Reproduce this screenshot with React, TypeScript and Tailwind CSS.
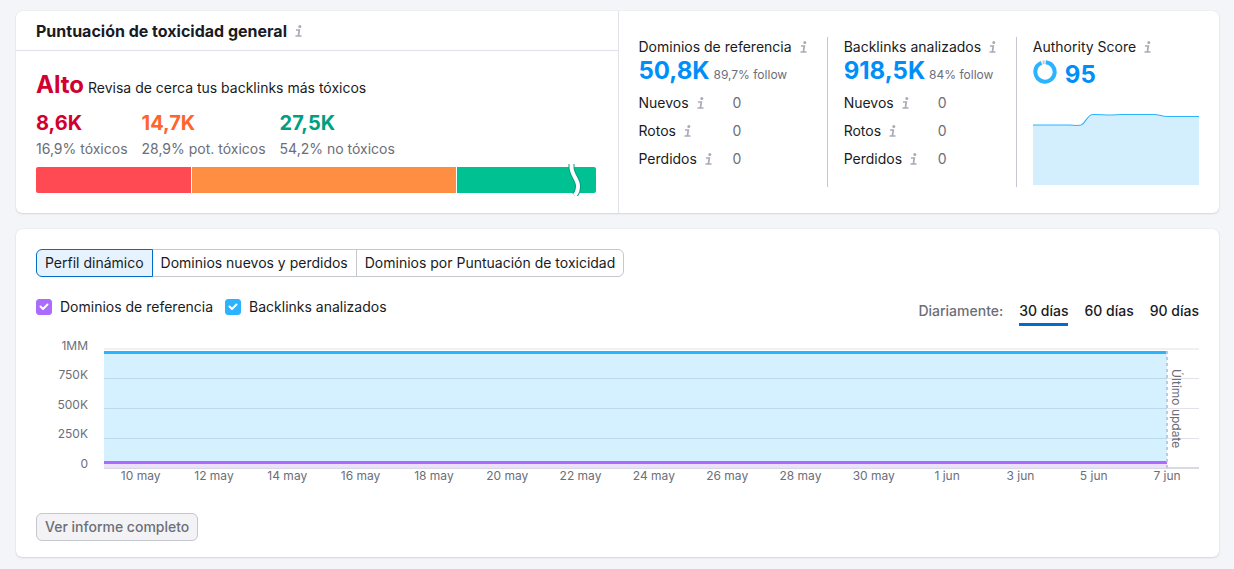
import { useState } from 'react';

const METRICS = [
  { id: 'domains', title: 'Dominios de referencia', value: '50,8K', follow: '89,7% follow' },
  { id: 'backlinks', title: 'Backlinks analizados', value: '918,5K', follow: '84% follow' },
];

const CHANGES = ['Nuevos', 'Rotos', 'Perdidos'];

const TOXICITY = [
  { value: '8,6K', label: '16,9% tóxicos', color: 'text-[#d1002f]' },
  { value: '14,7K', label: '28,9% pot. tóxicos', color: 'text-[#ff642d]' },
  { value: '27,5K', label: '54,2% no tóxicos', color: 'text-[#009f81]' },
];

const TABS = ['Perfil dinámico', 'Dominios nuevos y perdidos', 'Dominios por Puntuación de toxicidad'];

const PERIODS = ['30 días', '60 días', '90 días'];

const Y_TICKS = [
  { label: '1MM', y: 13 },
  { label: '750K', y: 42 },
  { label: '500K', y: 72 },
  { label: '250K', y: 101 },
  { label: '0', y: 131 },
];

const X_TICKS = [
  '10 may', '12 may', '14 may', '16 may', '18 may', '20 may', '22 may', '24 may',
  '26 may', '28 may', '30 may', '1 jun', '3 jun', '5 jun', '7 jun',
];

// the series ends before the right edge, at the last update
const SERIES_END = 97.08;
const TICK_STEP = SERIES_END / 14.5;

function InfoIcon() {
  return (
    <svg width="16" height="16" viewBox="0 0 16 16" className="shrink-0 text-[#a9abb6]" fill="none" aria-hidden="true">
      <circle cx="8.8" cy="3.5" r="1.5" fill="currentColor" />
      <path d="M5 7H8.3L7.4 13M4.5 13H10.5" stroke="currentColor" strokeWidth="1.7" />
    </svg>
  );
}

function ToxicityPanel() {
  return (
    <section>
      <div className="flex h-10 items-center gap-1 border-b border-[#e0e1e9] px-5">
        <h2 className="text-base font-bold">Puntuación de toxicidad general</h2>
        <InfoIcon />
      </div>
      <div className="py-5 pr-[22px] pl-5">
        <p className="leading-7">
          <span className="text-2xl leading-7 font-bold text-[#d1002f]">Alto</span>{' '}
          Revisa de cerca tus backlinks más tóxicos
        </p>
        <div className="mt-[9px] flex gap-[14px]">
          {TOXICITY.map((item) => (
            <div key={item.label}>
              <div className={`text-xl leading-6 font-bold ${item.color}`}>{item.value}</div>
              <div className="mt-1 text-[#6c6e79]">{item.label}</div>
            </div>
          ))}
        </div>
        <div className="relative mt-2 flex h-[26px] gap-px">
          <div className="flex-[155] rounded-l-xs bg-[#ff4953]" />
          <div className="flex-[264] bg-[#ff8e43]" />
          <div className="flex-[139] rounded-r-xs bg-[#00c192]" />
          {/* scale break */}
          <svg width="14" height="32" viewBox="0 0 14 32" fill="none" className="absolute -top-[3px] right-[14px]">
            <path d="M3.5 0V3C3.5 11 10 15 10 22C10 26 9 29 6.5 31.5" stroke="#009f81" strokeWidth="6" />
            <path d="M3.5 0V3C3.5 11 10 15 10 22C10 26 9 29 6.5 31.5" stroke="#fff" strokeWidth="4" />
          </svg>
        </div>
      </div>
    </section>
  );
}

function AuthorityScore() {
  return (
    <div className="border-l border-[#c4c7cf] pl-4">
      <div className="flex items-center gap-1">
        Authority Score
        <InfoIcon />
      </div>
      <div className="flex gap-2">
        <svg width="24" height="30" viewBox="0 0 24 30" fill="none" aria-hidden="true">
          <circle cx="12" cy="15" r="9.7" stroke="#2bb3ff" strokeWidth="4" pathLength="100" strokeDasharray="93 7" transform="rotate(-86 12 15)" />
          <path d="M10.6 3.4V7.2" stroke="#c4c7cf" strokeWidth="2" />
        </svg>
        <span className="pt-1 text-2xl leading-7 font-bold text-[#008ff8]">95</span>
      </div>
      <svg viewBox="0 0 166 72" preserveAspectRatio="none" className="mt-6 h-[72px] w-full" aria-hidden="true">
        <path d="M0 12H35C40 12 45 13 48 12C53 10 54 1.5 60 1.5C70 1.5 70 2 76 2C82 2 84 1.5 88 1.5H120C127 1.5 128 3.5 134 3.5H166V72H0Z" fill="#d3effe" />
        <path d="M0 12H35C40 12 45 13 48 12C53 10 54 1.5 60 1.5C70 1.5 70 2 76 2C82 2 84 1.5 88 1.5H120C127 1.5 128 3.5 134 3.5H166" fill="none" stroke="#2bb3ff" />
      </svg>
    </div>
  );
}

function MetricsPanel() {
  return (
    <section className="grid grid-cols-[188fr_189fr_183fr] border-l border-[#e0e1e9] px-5 py-[26px]">
      {METRICS.map((metric, i) => (
        <div key={metric.id} className={i > 0 ? 'border-l border-[#c4c7cf] pl-4' : ''}>
          <div className="flex items-center gap-1">
            {metric.title}
            <InfoIcon />
          </div>
          <div className="leading-7 whitespace-nowrap">
            <span className="text-2xl leading-7 font-bold text-[#008ff8]">{metric.value}</span>{' '}
            <span className="text-xs text-[#6c6e79]">{metric.follow}</span>
          </div>
          <table className="mt-px">
            <tbody>
              {CHANGES.map((label) => (
                <tr key={label}>
                  <th scope="row" className="w-[94px] py-1 text-left font-normal">
                    <span className="flex items-center gap-1">
                      {label}
                      <InfoIcon />
                    </span>
                  </th>
                  <td className="py-1 text-[#6c6e79]">0</td>
                </tr>
              ))}
            </tbody>
          </table>
        </div>
      ))}
      <AuthorityScore />
    </section>
  );
}

type CheckProps = { id: string; label: string; color: string; checked: boolean; onChange: () => void };

function SeriesCheckbox({ id, label, color, checked, onChange }: CheckProps) {
  return (
    <div className="flex items-center gap-2">
      <span className="relative flex size-4">
        <input
          id={id}
          type="checkbox"
          checked={checked}
          onChange={onChange}
          className={`size-4 appearance-none rounded-[3px] border ${color}`}
        />
        {checked && (
          <svg viewBox="0 0 16 16" fill="none" className="pointer-events-none absolute inset-0 size-4">
            <path d="M4.5 7.5L7 10L11.5 5.5" stroke="#fff" strokeWidth="2" strokeLinecap="round" strokeLinejoin="round" />
          </svg>
        )}
      </span>
      <label htmlFor={id}>{label}</label>
    </div>
  );
}

function ProfileChart({ domains, backlinks }: { domains: boolean; backlinks: boolean }) {
  const end = `${SERIES_END}%`;
  return (
    <div className="flex gap-4 text-xs">
      <svg width="52" height="148" className="shrink-0" fill="#6c6e79">
        {Y_TICKS.map((tick) => (
          <text key={tick.label} x="52" y={tick.y} textAnchor="end">{tick.label}</text>
        ))}
      </svg>
      <svg height="148" className="min-w-0 flex-1 overflow-visible" role="img" aria-label="Perfil dinámico">
        <rect y="11" width="100%" height="2" fill="#f0f0f4" />
        {[41, 71, 101].map((y) => (
          <rect key={y} y={y} width="100%" height="1" fill="#e0e1e9" />
        ))}
        <rect y="130" width="100%" height="2" fill="#d8dae2" />
        {backlinks && (
          <>
            <rect y="16" width={end} height="115" fill="#2bb3ff" fillOpacity="0.2" />
            <rect y="14" width={end} height="3" fill="#2bb3ff" />
          </>
        )}
        {domains && (
          <>
            <rect y="125" width={end} height="6" fill="#f1dfff" fillOpacity="0.9" />
            <rect y="124" width={end} height="3" fill="#ab6cfe" />
          </>
        )}
        <line x1={end} x2={end} y1="14" y2="131" stroke="#c4c7cf" strokeWidth="2" strokeDasharray="3 3" />
        <svg x={end} y="32" overflow="visible">
          <text transform="rotate(90)" x="0" y="-5" fill="#6c6e79">Último update</text>
        </svg>
        {X_TICKS.map((tick, i) => (
          <text key={tick} x={`${TICK_STEP * (i + 0.5)}%`} y="143" textAnchor="middle" fill="#6c6e79">{tick}</text>
        ))}
      </svg>
    </div>
  );
}

export default function App() {
  const [tab, setTab] = useState(TABS[0]);
  const [period, setPeriod] = useState(PERIODS[0]);
  const [showDomains, setShowDomains] = useState(true);
  const [showBacklinks, setShowBacklinks] = useState(true);

  return (
    <div className="min-h-screen bg-[#f4f5f9] pt-[11px] pr-[15px] pb-3 pl-4 font-['Inter',sans-serif] text-sm leading-5 text-[#191b23]">
      <div className="grid grid-cols-2 rounded-md bg-white shadow-[0_0_1px_rgba(25,27,35,0.16),0_1px_2px_rgba(25,27,35,0.12)]">
        <ToxicityPanel />
        <MetricsPanel />
      </div>

      <section className="mt-4 rounded-md bg-white px-5 pt-5 pb-4 shadow-[0_0_1px_rgba(25,27,35,0.16),0_1px_2px_rgba(25,27,35,0.12)]">
        <div className="flex">
          {TABS.map((name) => (
            <button
              key={name}
              onClick={() => setTab(name)}
              className={`-ml-px h-7 border px-2 first:ml-0 first:rounded-l-md last:rounded-r-md ${
                tab === name ? 'z-10 border-[#006dca] bg-[#e6f3fe]' : 'border-[#c4c7cf] bg-white'
              }`}
            >
              {name}
            </button>
          ))}
        </div>

        <div className="mt-5 flex justify-between">
          <div className="flex items-start gap-3">
            <SeriesCheckbox
              id="domains"
              label="Dominios de referencia"
              color="border-[#ab6cfe] checked:bg-[#ab6cfe]"
              checked={showDomains}
              onChange={() => setShowDomains(!showDomains)}
            />
            <SeriesCheckbox
              id="backlinks"
              label="Backlinks analizados"
              color="border-[#2bb3ff] checked:bg-[#2bb3ff]"
              checked={showBacklinks}
              onChange={() => setShowBacklinks(!showBacklinks)}
            />
          </div>
          <div className="flex gap-4 pt-1 font-medium">
            <span className="text-[#6c6e79]">Diariamente:</span>
            {PERIODS.map((name) => (
              <button
                key={name}
                onClick={() => setPeriod(name)}
                className={`border-b-3 pb-[2px] ${period === name ? 'border-[#006dca]' : 'border-transparent'}`}
              >
                {name}
              </button>
            ))}
          </div>
        </div>

        <div className="mt-[11px]">
          <ProfileChart domains={showDomains} backlinks={showBacklinks} />
        </div>

        <button className="mt-7 h-7 rounded-md border border-[#c4c7cf] bg-[#f3f3f6] px-2 font-medium text-[#6c6e79]">
          Ver informe completo
        </button>
      </section>
    </div>
  );
}
